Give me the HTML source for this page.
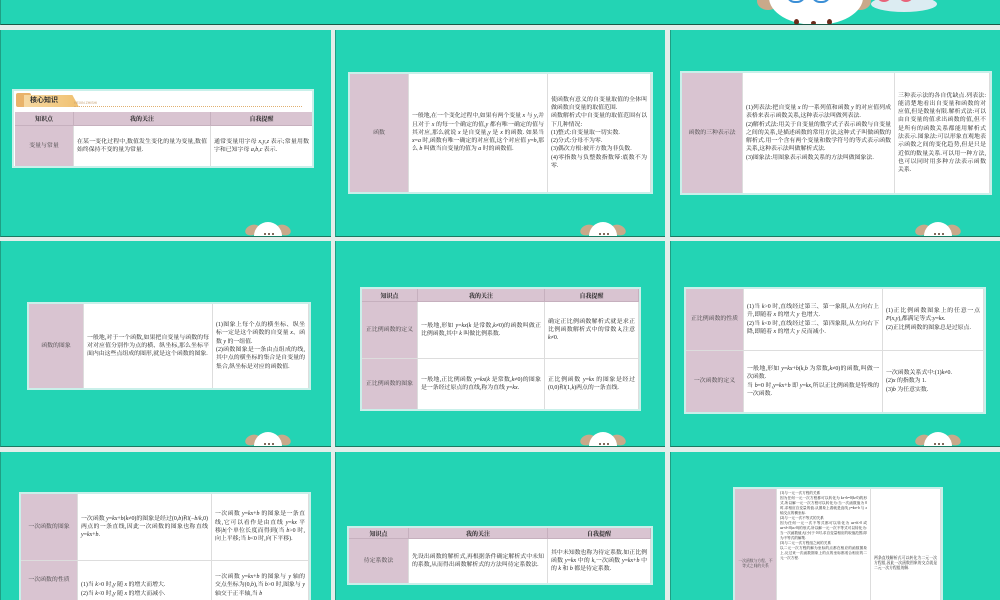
<!DOCTYPE html>
<html><head><meta charset="utf-8">
<style>
*{margin:0;padding:0;box-sizing:border-box}
html,body{width:1000px;height:600px;overflow:hidden}
body{background:#e3eeea;position:relative;font-family:"Liberation Serif","Noto Serif CJK SC","Noto Sans CJK SC",serif;color:#222}
.s{position:absolute;background:#23d4b4;border-bottom:1px solid #1a7a62;border-left:1px solid #1f9f84;overflow:hidden}
.t{position:absolute;background:#fff;border:2px solid #c9f0ea;overflow:hidden}
.c{position:absolute;font-size:5.9px;line-height:8.3px;padding:2px 3px;display:flex;align-items:center;text-align:justify;border-right:1px solid #ddd;overflow:hidden}
.c>span{display:block;width:100%}
.k{background:#d9c4d1;justify-content:center;text-align:center;color:#444}
.k>span{text-align:center}
.h{position:absolute;background:#d9c4d1;font-size:6px;font-weight:bold;display:flex;align-items:center;justify-content:center;border-right:1px solid #c6b0be;border-bottom:1px solid #c6b0be}
.m{position:absolute;width:46px;height:15px;overflow:hidden}
.m .e1,.m .e2{position:absolute;top:4px;width:15px;height:10px;background:#c9a98a;border-radius:50%}
.m .e1{left:0;transform:rotate(-20deg)}.m .e2{right:0;transform:rotate(20deg)}
.m .hd{position:absolute;left:9px;top:1px;width:28px;height:14px;background:#fff;border-radius:14px 14px 0 0}
.m .d{position:absolute;top:12px;width:2px;height:2px;background:#5a3a2a;border-radius:50%}
</style></head><body>

<div class="s" style="left:0;top:0;width:1000px;height:25px;border-bottom:1px solid #1a5a48">
  <div style="position:absolute;left:756px;top:-8px;width:22px;height:18px;background:#c9a98a;border-radius:50%"></div>
  <div style="position:absolute;left:848px;top:-8px;width:22px;height:18px;background:#c9a98a;border-radius:50%"></div>
  <div style="position:absolute;left:768px;top:-30px;width:94px;height:55px;background:#fff;border-radius:50%"></div>
  <div style="position:absolute;left:785px;top:-6px;width:20px;height:9px;border:2px solid #3b8fd6;border-top:none;border-radius:0 0 10px 10px"></div>
  <div style="position:absolute;left:810px;top:-6px;width:20px;height:9px;border:2px solid #3b8fd6;border-top:none;border-radius:0 0 10px 10px"></div>
  <div style="position:absolute;left:870px;top:-4px;width:66px;height:16px;background:#dcecf2;border-radius:50%"></div>
  <div style="position:absolute;left:875px;top:-6px;width:16px;height:8px;border:2px solid #e8637a;border-top:none;border-radius:0 0 8px 8px"></div>
  <div style="position:absolute;left:897px;top:-6px;width:16px;height:8px;border:2px solid #e8637a;border-top:none;border-radius:0 0 8px 8px"></div>
  <div style="position:absolute;left:793px;top:19px;width:5px;height:6px;background:#6a2a1a;border-radius:50%"></div>
  <div style="position:absolute;left:810px;top:21px;width:5px;height:4px;background:#6a2a1a;border-radius:50%"></div>
  <div style="position:absolute;left:826px;top:19px;width:5px;height:6px;background:#6a2a1a;border-radius:50%"></div>
</div>

<div class="s" style="left:0;top:30px;width:331px;height:207px"></div>
<div class="s" style="left:335px;top:30px;width:330px;height:207px"></div>
<div class="s" style="left:670px;top:30px;width:330px;height:207px"></div>
<div class="s" style="left:0;top:241px;width:331px;height:206px"></div>
<div class="s" style="left:335px;top:241px;width:330px;height:206px"></div>
<div class="s" style="left:670px;top:241px;width:330px;height:206px"></div>
<div class="s" style="left:0;top:452px;width:331px;height:148px;border-bottom:none"></div>
<div class="s" style="left:335px;top:452px;width:330px;height:148px;border-bottom:none"></div>
<div class="s" style="left:670px;top:452px;width:330px;height:148px;border-bottom:none"></div>

<div class="m" style="left:245px;top:221px"><div class="e1"></div><div class="e2"></div><div class="hd"></div><div class="d" style="left:19px"></div><div class="d" style="left:23px"></div><div class="d" style="left:27px"></div></div>
<div class="m" style="left:580px;top:221px"><div class="e1"></div><div class="e2"></div><div class="hd"></div><div class="d" style="left:19px"></div><div class="d" style="left:23px"></div><div class="d" style="left:27px"></div></div>
<div class="m" style="left:915px;top:221px"><div class="e1"></div><div class="e2"></div><div class="hd"></div><div class="d" style="left:19px"></div><div class="d" style="left:23px"></div><div class="d" style="left:27px"></div></div>
<div class="m" style="left:245px;top:431px"><div class="e1"></div><div class="e2"></div><div class="hd"></div><div class="d" style="left:19px"></div><div class="d" style="left:23px"></div><div class="d" style="left:27px"></div></div>
<div class="m" style="left:580px;top:431px"><div class="e1"></div><div class="e2"></div><div class="hd"></div><div class="d" style="left:19px"></div><div class="d" style="left:23px"></div><div class="d" style="left:27px"></div></div>
<div class="m" style="left:915px;top:431px"><div class="e1"></div><div class="e2"></div><div class="hd"></div><div class="d" style="left:19px"></div><div class="d" style="left:23px"></div><div class="d" style="left:27px"></div></div>

<!-- S1 -->
<div class="t" style="left:12px;top:89px;width:302px;height:79px">
  <div style="position:absolute;left:2px;top:2px;width:15px;height:14px;background:#e9b36a;border-radius:2px"></div>
  <div style="position:absolute;left:10px;top:4px;width:55px;height:12px;background:linear-gradient(90deg,#f6d9a3,#f0c070);clip-path:polygon(0 0,88% 0,100% 100%,0 100%)"></div>
  <div style="position:absolute;left:16px;top:4px;font-size:7px;font-weight:bold;color:#333;font-family:'Liberation Sans','Noto Sans CJK SC',sans-serif">核心知识</div>
  <div style="position:absolute;left:60px;top:10px;font-size:3.5px;color:#c8a070;font-family:'Liberation Sans',sans-serif">HEXIN ZHISHI</div>
  <div style="position:absolute;left:60px;top:15px;width:228px;border-top:1px dotted #e0b070"></div>
  <div class="h" style="left:1px;top:21px;width:59px;height:14px">知识点</div>
  <div class="h" style="left:60px;top:21px;width:137px;height:14px">我的关注</div>
  <div class="h" style="left:197px;top:21px;width:102px;height:14px">自我提醒</div>
  <div class="c k" style="left:1px;top:35px;width:59px;height:40px"><span>变量与常量</span></div>
  <div class="c" style="left:60px;top:35px;width:137px;height:40px"><span>在某一变化过程中,数值发生变化的量为变量,数值始终保持不变的量为常量.</span></div>
  <div class="c" style="left:197px;top:35px;width:102px;height:40px"><span>通常变量用字母 <i>x</i>,<i>y</i>,<i>z</i> 表示;常量用数字和已知字母 <i>a</i>,<i>b</i>,<i>c</i> 表示.</span></div>
</div>

<!-- S2 -->
<div class="t" style="left:348px;top:72px;width:305px;height:122px">
  <div class="c k" style="left:0;top:0;width:59px;height:118px"><span>函数</span></div>
  <div class="c" style="left:59px;top:0;width:139px;height:118px"><span>一般地,在一个变化过程中,如果有两个变量 <i>x</i> 与 <i>y</i>,并且对于 <i>x</i> 的每一个确定的值,<i>y</i> 都有唯一确定的值与其对应,那么就说 <i>x</i> 是自变量,<i>y</i> 是 <i>x</i> 的函数. 如果当 <i>x</i>=<i>a</i> 时,函数有唯一确定的对应值,这个对应值 <i>y</i>=<i>b</i>,那么 <i>b</i> 叫做当自变量的值为 <i>a</i> 时的函数值.</span></div>
  <div class="c" style="left:198px;top:0;width:103px;height:118px"><span>使函数有意义的自变量取值的全体叫做函数自变量的取值范围.<br>函数解析式中自变量的取值范围有以下几种情况:<br>(1)整式:自变量取一切实数.<br>(2)分式:分母不为零.<br>(3)偶次方根:被开方数为非负数.<br>(4)零指数与负整数指数幂:底数不为零.</span></div>
</div>

<!-- S3 -->
<div class="t" style="left:680px;top:71px;width:312px;height:124px">
  <div class="c k" style="left:0;top:0;width:61px;height:120px"><span>函数的三种表示法</span></div>
  <div class="c" style="left:61px;top:0;width:152px;height:120px"><span>(1)列表法:把自变量 <i>x</i> 的一系列值和函数 <i>y</i> 的对应值列成表格来表示函数关系,这种表示法叫做列表法.<br>(2)解析式法:用关于自变量的数学式子表示函数与自变量之间的关系,是描述函数的常用方法,这种式子叫做函数的解析式.用一个含有两个变量和数学符号的等式表示函数关系,这种表示法叫做解析式法.<br>(3)图象法:用图象表示函数关系的方法叫做图象法.</span></div>
  <div class="c" style="left:213px;top:0;width:95px;height:120px"><span>三种表示法的各自优缺点.列表法:能清楚地看出自变量和函数的对应值,但是数量有限.解析式法:可以由自变量的值求出函数的值,但不是所有的函数关系都能用解析式法表示.图象法:可以形象直观地表示函数之间的变化趋势,但是只是近似的数量关系.可以用一种方法,也可以同时用多种方法表示函数关系.</span></div>
</div>

<!-- S4 -->
<div class="t" style="left:27px;top:302px;width:284px;height:88px">
  <div class="c k" style="left:0;top:0;width:55px;height:84px"><span>函数的图象</span></div>
  <div class="c" style="left:55px;top:0;width:129px;height:84px"><span>一般地,对于一个函数,如果把自变量与函数的每对对应值分别作为点的横、纵坐标,那么坐标平面内由这些点组成的图形,就是这个函数的图象.</span></div>
  <div class="c" style="left:184px;top:0;width:96px;height:84px"><span>(1)图象上每个点的横坐标、纵坐标一定是这个函数的自变量 <i>x</i>、函数 <i>y</i> 的一组值.<br>(2)函数图象是一条由点组成的线,其中点的横坐标的集合是自变量的集合,纵坐标是对应的函数值.</span></div>
</div>

<!-- S5 -->
<div class="t" style="left:360px;top:287px;width:281px;height:124px">
  <div class="h" style="left:0;top:0;width:56px;height:13px">知识点</div>
  <div class="h" style="left:56px;top:0;width:127px;height:13px">我的关注</div>
  <div class="h" style="left:183px;top:0;width:94px;height:13px">自我提醒</div>
  <div class="c k" style="left:0;top:13px;width:56px;height:57px;border-bottom:1px solid #ddd"><span>正比例函数的定义</span></div>
  <div class="c" style="left:56px;top:13px;width:127px;height:57px;border-bottom:1px solid #ddd"><span>一般地,形如 <i>y</i>=<i>kx</i>(<i>k</i> 是常数,<i>k</i>≠0)的函数叫做正比例函数,其中 <i>k</i> 叫做比例系数.</span></div>
  <div class="c" style="left:183px;top:13px;width:94px;height:57px;border-bottom:1px solid #ddd"><span>确定正比例函数解析式就是求正比例函数解析式中的常数 <i>k</i>,注意 <i>k</i>≠0.</span></div>
  <div class="c k" style="left:0;top:70px;width:56px;height:50px"><span>正比例函数的图象</span></div>
  <div class="c" style="left:56px;top:70px;width:127px;height:50px"><span>一般地,正比例函数 <i>y</i>=<i>kx</i>(<i>k</i> 是常数,<i>k</i>≠0)的图象是一条经过原点的直线,称为直线 <i>y</i>=<i>kx</i>.</span></div>
  <div class="c" style="left:183px;top:70px;width:94px;height:50px"><span>正比例函数 <i>y</i>=<i>kx</i> 的图象是经过(0,0)和(1,<i>k</i>)两点的一条直线.</span></div>
</div>

<!-- S6 -->
<div class="t" style="left:684px;top:287px;width:302px;height:127px">
  <div class="c k" style="left:0;top:0;width:58px;height:62px;border-bottom:1px solid #ddd"><span>正比例函数的性质</span></div>
  <div class="c" style="left:58px;top:0;width:139px;height:62px;border-bottom:1px solid #ddd"><span>(1)当 <i>k</i>&gt;0 时,直线经过第三、第一象限,从左向右上升,即随着 <i>x</i> 的增大 <i>y</i> 也增大.<br>(2)当 <i>k</i>&lt;0 时,直线经过第二、第四象限,从左向右下降,即随着 <i>x</i> 的增大 <i>y</i> 反而减小.</span></div>
  <div class="c" style="left:197px;top:0;width:101px;height:62px;border-bottom:1px solid #ddd"><span>(1)正比例函数图象上的任意一点 <i>P</i>(<i>x</i>,<i>y</i>),都满足等式:<i>y</i>=<i>kx</i>.<br>(2)正比例函数的图象总是过原点.</span></div>
  <div class="c k" style="left:0;top:62px;width:58px;height:61px"><span>一次函数的定义</span></div>
  <div class="c" style="left:58px;top:62px;width:139px;height:61px"><span>一般地,形如 <i>y</i>=<i>kx</i>+<i>b</i>(<i>k</i>,<i>b</i> 为常数,<i>k</i>≠0)的函数,叫做一次函数.<br>当 <i>b</i>=0 时,<i>y</i>=<i>kx</i>+<i>b</i> 即 <i>y</i>=<i>kx</i>,所以正比例函数是特殊的一次函数.</span></div>
  <div class="c" style="left:197px;top:62px;width:101px;height:61px"><span>一次函数关系式中:(1)<i>k</i>≠0.<br>(2)<i>x</i> 的指数为 1.<br>(3)<i>b</i> 为任意实数.</span></div>
</div>

<!-- S7 -->
<div class="t" style="left:19px;top:492px;width:292px;height:108px;border-bottom:none">
  <div class="c k" style="left:0;top:0;width:57px;height:67px;border-bottom:1px solid #ddd"><span>一次函数的图象</span></div>
  <div class="c" style="left:57px;top:0;width:134px;height:67px;border-bottom:1px solid #ddd"><span>一次函数 <i>y</i>=<i>kx</i>+<i>b</i>(<i>k</i>≠0)的图象是经过(0,<i>b</i>)和(−<i>b</i>/<i>k</i>,0)两点的一条直线,因此一次函数的图象也称直线 <i>y</i>=<i>kx</i>+<i>b</i>.</span></div>
  <div class="c" style="left:191px;top:0;width:97px;height:67px;border-bottom:1px solid #ddd"><span>一次函数 <i>y</i>=<i>kx</i>+<i>b</i> 的图象是一条直线,它可以看作是由直线 <i>y</i>=<i>kx</i> 平移|<i>b</i>|个单位长度而得到(当 <i>b</i>&gt;0 时,向上平移;当 <i>b</i>&lt;0 时,向下平移).</span></div>
  <div class="c k" style="left:0;top:67px;width:57px;height:39px"><span>一次函数的性质</span></div>
  <div class="c" style="left:57px;top:67px;width:134px;height:39px;align-items:flex-end"><span>(1)当 <i>k</i>&gt;0 时,<i>y</i> 随 <i>x</i> 的增大而增大.<br>(2)当 <i>k</i>&lt;0 时,<i>y</i> 随 <i>x</i> 的增大而减小.</span></div>
  <div class="c" style="left:191px;top:67px;width:97px;height:39px;align-items:flex-end"><span>一次函数 <i>y</i>=<i>kx</i>+<i>b</i> 的图象与 <i>y</i> 轴的交点坐标为(0,<i>b</i>),当 <i>b</i>&gt;0 时,图象与 <i>y</i> 轴交于正半轴,当 <i>b</i></span></div>
</div>

<!-- S8 -->
<div class="t" style="left:347px;top:526px;width:306px;height:59px">
  <div class="h" style="left:0;top:0;width:60px;height:11px">知识点</div>
  <div class="h" style="left:60px;top:0;width:139px;height:11px">我的关注</div>
  <div class="h" style="left:199px;top:0;width:103px;height:11px">自我提醒</div>
  <div class="c k" style="left:0;top:11px;width:60px;height:44px"><span>待定系数法</span></div>
  <div class="c" style="left:60px;top:11px;width:139px;height:44px"><span>先设出函数的解析式,再根据条件确定解析式中未知的系数,从而得出函数解析式的方法叫待定系数法.</span></div>
  <div class="c" style="left:199px;top:11px;width:103px;height:44px"><span>其中未知数也称为待定系数.如正比例函数 <i>y</i>=<i>kx</i> 中的 <i>k</i>,一次函数 <i>y</i>=<i>kx</i>+<i>b</i> 中的 <i>k</i> 和 <i>b</i> 都是待定系数.</span></div>
</div>

<!-- S9 -->
<div class="t" style="left:733px;top:487px;width:210px;height:113px;border-bottom:none">
  <div class="c k" style="left:0;top:0;width:42px;height:111px;font-size:3.8px;line-height:5px;padding-top:40px"><span>一次函数与方程、不等式之间的关系</span></div>
  <div class="c" style="left:42px;top:0;width:94px;height:111px;font-size:3.6px;line-height:5px;align-items:flex-start"><span>(1)与一元一次方程的关系<br>因为任何一元一次方程都可以转化为 <i>kx</i>+<i>b</i>=0(<i>k</i>≠0)的形式,所以解一元一次方程可以转化为:当一次函数值为 0 时,求相应自变量的值.从图象上看就是直线 <i>y</i>=<i>kx</i>+<i>b</i> 与 <i>x</i> 轴交点的横坐标.<br>(2)与一元一次不等式的关系<br>因为任何一元一次不等式都可以转化为 <i>ax</i>+<i>b</i>&gt;0 或 <i>ax</i>+<i>b</i>&lt;0(<i>a</i>≠0)的形式,所以解一元一次不等式可以转化为:当一次函数值大(小)于 0 时,求自变量相应的取值范围,即为不等式的解集.<br>(3)与二元一次方程组之间的关系<br>以二元一次方程的解为坐标的点都在相应的函数图象上,反过来一次函数图象上的点的坐标都适合相应的二元一次方程.</span></div>
  <div class="c" style="left:136px;top:0;width:70px;height:111px;font-size:3.8px;line-height:5.2px;padding-top:40px"><span>两条直线解析式可以转化为二元一次方程组,因此一次函数图象的交点就是二元一次方程组的解.</span></div>
</div>

</body></html>
